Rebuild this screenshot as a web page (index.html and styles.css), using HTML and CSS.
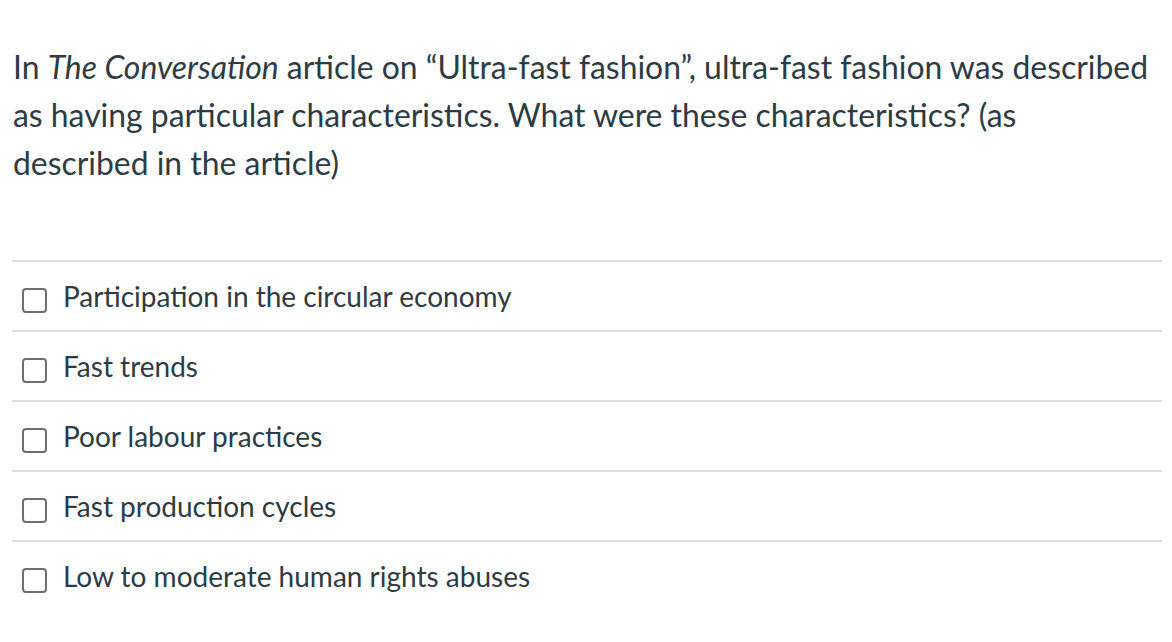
FILE: index.html
```html
<!DOCTYPE html>
<html lang="en">
<head>
<meta charset="utf-8">
<link rel="stylesheet" href="styles.css">
</head>
<body>
<div class="quiz">
  <p class="question">In <em>The Conversation</em> article on “Ultra-fast fashion”, ultra-fast fashion was described as having particular characteristics. What were these characteristics? (as described in the article)</p>
  <ul class="answers">
    <li class="answer"><span class="box"></span><span class="label">Participation in the circular economy</span></li>
    <li class="answer"><span class="box"></span><span class="label">Fast trends</span></li>
    <li class="answer"><span class="box"></span><span class="label">Poor labour practices</span></li>
    <li class="answer"><span class="box"></span><span class="label">Fast production cycles</span></li>
    <li class="answer"><span class="box"></span><span class="label">Low to moderate human rights abuses</span></li>
  </ul>
</div>
</body>
</html>
```
FILE: styles.css
```css
html, body {
  margin: 0;
  padding: 0;
  background: #ffffff;
}
.quiz {
  font-family: Lato, "Noto Sans", sans-serif;
  color: #2d3b45;
  padding: 43px 10px 0 13px;
}
.question {
  margin: 0;
  font-size: 31.9px;
  line-height: 48px;
  width: 1141px;
}
.answers {
  list-style: none;
  margin: 73px 0 0 -1px;
  padding: 0;
  width: 1150px;
}
.answer {
  display: flex;
  align-items: center;
  gap: 16px;
  height: 68px;
  border-top: 2px solid #dddddd;
  padding: 0 0 0 10px;
  font-size: 28px;
}
.box {
  width: 21px;
  height: 21px;
  margin-top: 9px;
  border: 2px solid #6e6e6e;
  border-radius: 4px;
  flex: none;
}
.label {
  line-height: 1;
}
```
